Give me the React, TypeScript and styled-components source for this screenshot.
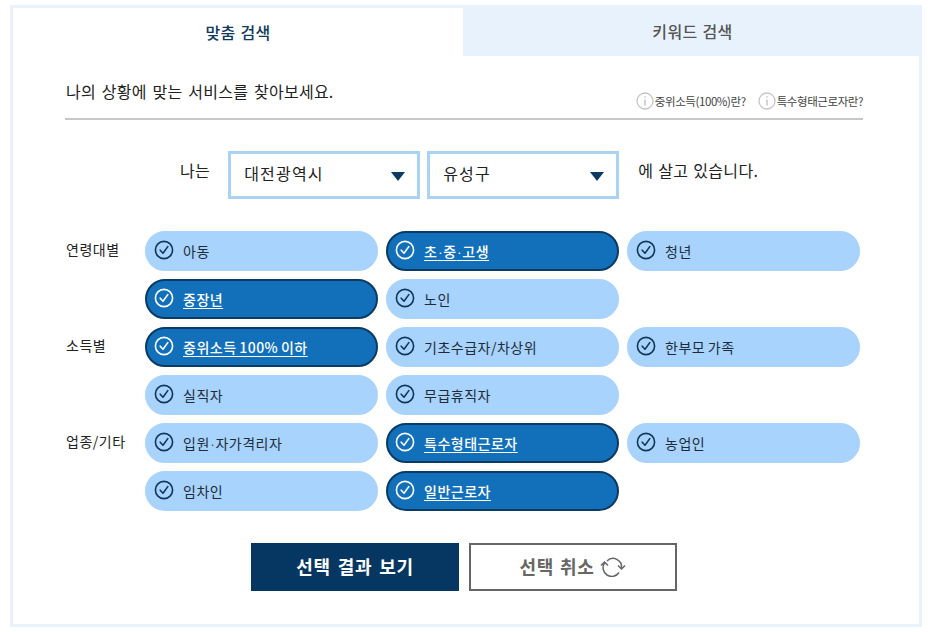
import React from "react";
import styled, { createGlobalStyle } from "styled-components";

const Global = createGlobalStyle`
  html, body { margin: 0; padding: 0; background: #fff; }
  body { font-family: "Noto Sans CJK KR", "Noto Sans", sans-serif; color: #222; }
  * { box-sizing: border-box; }
`;
const Panel = styled.div`
  width: 912px; height: 622px; margin: 5px 0 0 10px;
  border: 3px solid #e8f2fd; background: #fff;
  display: flex; flex-direction: column;
`;
const Tabs = styled.div`display: flex; height: 48px; margin-right: -3px;`;
const Tab = styled.div<{ $active?: boolean }>`
  flex: ${p => (p.$active ? "0 0 450px" : "1")};
  display: flex; align-items: center; justify-content: center;
  font-size: 16px; font-weight: 500; letter-spacing: 0.35px; word-spacing: 1px;
  background: ${p => (p.$active ? "#fff" : "#e8f2fd")};
  color: ${p => (p.$active ? "#0f3a5c" : "#555")};
  margin-top: ${p => (p.$active ? 0 : "-3px")};
  height: ${p => (p.$active ? "48px" : "51px")};
`;
const Body = styled.div`padding: 0 56px 0 52px; flex: 1; display: flex; flex-direction: column;`;
const Header = styled.div`
  display: flex; justify-content: space-between; align-items: flex-end;
  height: 64px; border-bottom: 2px solid #c8c8c8; width: 798px; padding-bottom: 8px;
`;
const Title = styled.div`
  font-size: 16px; line-height: 22px; margin: 0 0 8px 1px; color: #222;
  letter-spacing: 0.25px; word-spacing: 2px;
`;
const Infos = styled.div`display: flex; gap: 12px;`;
const Info = styled.div`
  display: flex; align-items: center; gap: 1px; font-size: 11.5px; color: #444; letter-spacing: -0.42px; height: 18px;
`;
const Place = styled.div`display: flex; align-items: flex-start; margin: 31px 0 0 115px;`;
const PlaceText = styled.div`font-size: 16px; line-height: 24px; margin-top: 7px; color: #222; letter-spacing: 0.35px; word-spacing: 1px;`;
const Selects = styled.div`display: flex; gap: 7px; margin: 0 19px 0 18px;`;
const SelectBox = styled.div`
  width: 192px; height: 48px; border: 3px solid #a8d3f5; background: #fff;
  display: flex; align-items: center; justify-content: space-between; padding: 0 12px 4px 13px;
  font-size: 16px; color: #222; letter-spacing: 1.2px;
`;
const Caret = styled.span`
  width: 0; height: 0; border-left: 7px solid transparent; border-right: 7px solid transparent;
  border-top: 9px solid #0b3a63; margin-top: 6px;
`;
const Grid = styled.div`display: flex; flex-direction: column; gap: 8px; margin-top: 32px;`;
const Group = styled.div`display: flex;`;
const GroupLabel = styled.div`width: 79px; margin-left: 1px; font-size: 14px; line-height: 20px; padding-top: 8px; color: #222; flex: none; letter-spacing: 0.5px;`;
const Pills = styled.div`display: grid; grid-template-columns: repeat(3, 233px); grid-auto-rows: 40px; gap: 8px;`;
const Pill = styled.div<{ $on?: boolean }>`
  border-radius: 20px; display: flex; align-items: center; padding-left: 7px; gap: 9px;
  background: ${p => (p.$on ? "#1270bb" : "#a8d3fc")};
  border: 2px solid ${p => (p.$on ? "#0b3a63" : "#a8d3fc")};
  color: ${p => (p.$on ? "#fff" : "#1c2c3a")};
  font-size: 14px; font-weight: ${p => (p.$on ? 500 : 400)};
  letter-spacing: 0.5px; word-spacing: -1px;
  text-decoration: ${p => (p.$on ? "underline" : "none")}; text-underline-offset: 3px;
`;
const Dot = styled.span`font-size: 10px; letter-spacing: 0;`;
const Check = styled.svg`flex: none; margin-top: -1px; margin-bottom: 2px;`;
const Actions = styled.div`display: flex; gap: 10px; margin: 32px 0 0 186px;`;
const Primary = styled.div`
  width: 208px; height: 48px; background: #053762; color: #fff; font-size: 18px; font-weight: 700;
  display: flex; align-items: center; justify-content: center; letter-spacing: 0.75px; word-spacing: 2px; padding-bottom: 2px;
`;
const Secondary = styled.div`
  width: 208px; height: 48px; border: 2px solid #666; color: #666; font-size: 18px; font-weight: 700; background: #fff;
  display: flex; align-items: center; justify-content: center; gap: 6px; letter-spacing: 0.7px; word-spacing: 1px; padding-bottom: 2px;
`;

const CheckIcon = ({ on }: { on?: boolean }) => {
  const c = on ? "#fff" : "#12365a";
  return (
    <Check width="20" height="20" viewBox="0 0 20 20" fill="none" stroke={c} strokeWidth="1.6">
      <circle cx="10" cy="10" r="8.6" />
      <path d="M6.2 10.2l2.8 3 4.8-6.6" strokeLinecap="round" strokeLinejoin="round" />
    </Check>
  );
};
const InfoIcon = () => (
  <svg width="18" height="18" viewBox="0 0 18 18" fill="none">
    <circle cx="9" cy="9" r="8" stroke="#c4c4c4" strokeWidth="1.3" />
    <path d="M9 7.5v6" stroke="#b8b8b8" strokeWidth="1.2" />
    <circle cx="9" cy="5" r="0.8" fill="#b8b8b8" />
  </svg>
);
const Refresh = () => (
  <svg width="26" height="22" viewBox="0 0 26 22" fill="none" stroke="#666" strokeWidth="1.5">
    <path d="M7 6 A8.5 8.5 0 0 1 21.5 13" />
    <path d="M19 17.5 A8.5 8.5 0 0 1 4.5 8" />
    <path d="M1 10.5L4.5 7L8 10.5M18 10.5L21.5 14L25 10.5" />
  </svg>
);

const withDots = (t: string) =>
  t.split("·").flatMap((part, i) => (i === 0 ? [part] : [<Dot key={i}>·</Dot>, part]));

type Item = [string, boolean?];
const groups: { label: string; items: Item[] }[] = [
  { label: "연령대별", items: [["아동"], ["초·중·고생", true], ["청년"], ["중장년", true], ["노인"]] },
  { label: "소득별", items: [["중위소득 100% 이하", true], ["기초수급자/차상위"], ["한부모 가족"], ["실직자"], ["무급휴직자"]] },
  { label: "업종/기타", items: [["입원·자가격리자"], ["특수형태근로자", true], ["농업인"], ["임차인"], ["일반근로자", true]] },
];

export default function App() {
  return (
    <>
      <Global />
      <Panel>
        <Tabs>
          <Tab $active>맞춤 검색</Tab>
          <Tab>키워드 검색</Tab>
        </Tabs>
        <Body>
          <Header>
            <Title>나의 상황에 맞는 서비스를 찾아보세요.</Title>
            <Infos>
              <Info><InfoIcon />중위소득(100%)란?</Info>
              <Info><InfoIcon />특수형태근로자란?</Info>
            </Infos>
          </Header>
          <Place>
            <PlaceText>나는</PlaceText>
            <Selects>
              <SelectBox>대전광역시<Caret /></SelectBox>
              <SelectBox>유성구<Caret /></SelectBox>
            </Selects>
            <PlaceText>에 살고 있습니다.</PlaceText>
          </Place>
          <Grid>
            {groups.map(g => (
              <Group key={g.label}>
                <GroupLabel>{g.label}</GroupLabel>
                <Pills>
                  {g.items.map(([t, on]) => (
                    <Pill key={t} $on={on}><CheckIcon on={on} /><span>{withDots(t)}</span></Pill>
                  ))}
                </Pills>
              </Group>
            ))}
          </Grid>
          <Actions>
            <Primary>선택 결과 보기</Primary>
            <Secondary>선택 취소<Refresh /></Secondary>
          </Actions>
        </Body>
      </Panel>
    </>
  );
}
